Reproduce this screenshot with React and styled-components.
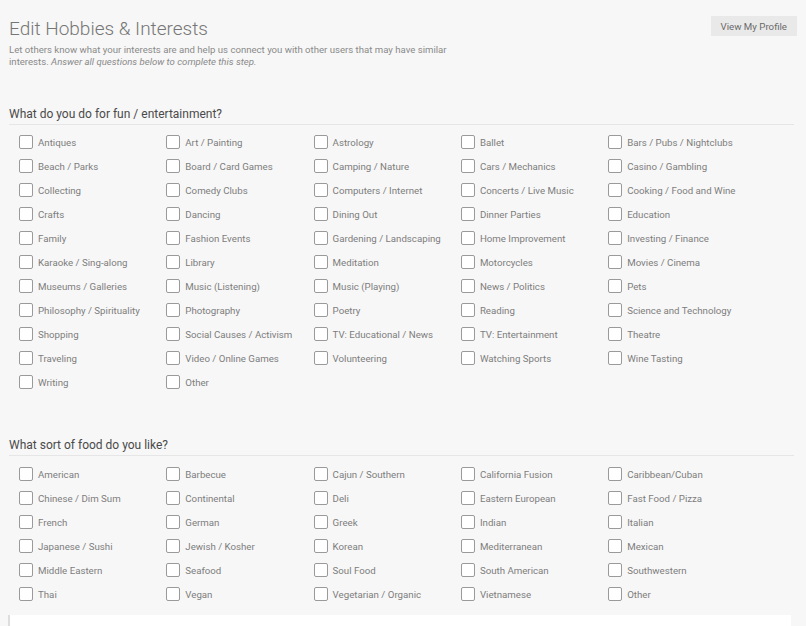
import React from 'react'
import styled, { createGlobalStyle } from 'styled-components'

const GlobalStyle = createGlobalStyle`
  body {
    margin: 0;
    background: #f7f7f7;
    font-family: Roboto, "Liberation Sans", sans-serif;
  }
`

const fun = [
  'Antiques', 'Art / Painting', 'Astrology', 'Ballet', 'Bars / Pubs / Nightclubs',
  'Beach / Parks', 'Board / Card Games', 'Camping / Nature', 'Cars / Mechanics', 'Casino / Gambling',
  'Collecting', 'Comedy Clubs', 'Computers / Internet', 'Concerts / Live Music', 'Cooking / Food and Wine',
  'Crafts', 'Dancing', 'Dining Out', 'Dinner Parties', 'Education',
  'Family', 'Fashion Events', 'Gardening / Landscaping', 'Home Improvement', 'Investing / Finance',
  'Karaoke / Sing-along', 'Library', 'Meditation', 'Motorcycles', 'Movies / Cinema',
  'Museums / Galleries', 'Music (Listening)', 'Music (Playing)', 'News / Politics', 'Pets',
  'Philosophy / Spirituality', 'Photography', 'Poetry', 'Reading', 'Science and Technology',
  'Shopping', 'Social Causes / Activism', 'TV: Educational / News', 'TV: Entertainment', 'Theatre',
  'Traveling', 'Video / Online Games', 'Volunteering', 'Watching Sports', 'Wine Tasting',
  'Writing', 'Other',
]

const food = [
  'American', 'Barbecue', 'Cajun / Southern', 'California Fusion', 'Caribbean/Cuban',
  'Chinese / Dim Sum', 'Continental', 'Deli', 'Eastern European', 'Fast Food / Pizza',
  'French', 'German', 'Greek', 'Indian', 'Italian',
  'Japanese / Sushi', 'Jewish / Kosher', 'Korean', 'Mediterranean', 'Mexican',
  'Middle Eastern', 'Seafood', 'Soul Food', 'South American', 'Southwestern',
  'Thai', 'Vegan', 'Vegetarian / Organic', 'Vietnamese', 'Other',
]

const Page = styled.div`
  padding: 0 9px;
  height: 626px;
  overflow: hidden;
`

const Header = styled.div`
  display: flex;
  justify-content: space-between;
  align-items: flex-start;
  padding-top: 16px;
`

const Title = styled.h1`
  margin: 1px 0 0;
  font-size: 19px;
  font-weight: 300;
  color: #767676;
  line-height: 24px;
`

const ProfileButton = styled.button`
  background: #e9e9e9;
  border: none;
  color: #6a6a6a;
  font-family: Roboto, "Liberation Sans", sans-serif;
  font-size: 9.7px;
  height: 20px;
  padding: 0 10px;
  cursor: pointer;
`

const Desc = styled.p`
  margin: 3px 0 0;
  font-size: 9.6px;
  line-height: 12px;
  color: #8a8a8a;
  max-width: 460px;
  em { font-style: italic; }
`

const Section = styled.section`
  margin-top: ${p => p.$top}px;
`

const Heading = styled.h2`
  margin: 0 3px 0 0;
  font-size: 12px;
  font-weight: 400;
  color: #4a4a4a;
  padding-bottom: 3px;
  border-bottom: 1px solid #e6e6e6;
`

const Grid = styled.div`
  display: grid;
  grid-template-columns: repeat(5, 147.3px);
  grid-auto-rows: 24px;
  padding: ${p => p.$top}px 0 0 10px;
`

const Item = styled.label`
  display: flex;
  align-items: center;
  gap: 5px;
  font-size: 9.7px;
  color: #7d7d7d;
`

const Box = styled.span`
  width: 12px;
  height: 12px;
  border: 1px solid #9a9a9a;
  border-radius: 2px;
  background: #fff;
  flex: none;
`

const NextCard = styled.div`
  margin: 9px 6px 0 -1px;
  height: 40px;
  background: #fff;
  border-left: 2px solid #ddd;
`

const Checks = ({ items, top }) => (
  <Grid $top={top}>
    {items.map((t, i) => (
      <Item key={i}>
        <Box />
        {t}
      </Item>
    ))}
  </Grid>
)

export default function App() {
  return (
    <Page>
      <GlobalStyle />
      <Header>
        <Title>Edit Hobbies &amp; Interests</Title>
        <ProfileButton>View My Profile</ProfileButton>
      </Header>
      <Desc>
        Let others know what your interests are and help us connect you with other users that may have similar
        interests. <em>Answer all questions below to complete this step.</em>
      </Desc>
      <Section $top={39}>
        <Heading>What do you do for fun / entertainment?</Heading>
        <Checks items={fun} top={5} />
      </Section>
      <Section $top={44}>
        <Heading>What sort of food do you like?</Heading>
        <Checks items={food} top={6} />
      </Section>
      <NextCard />
    </Page>
  )
}
